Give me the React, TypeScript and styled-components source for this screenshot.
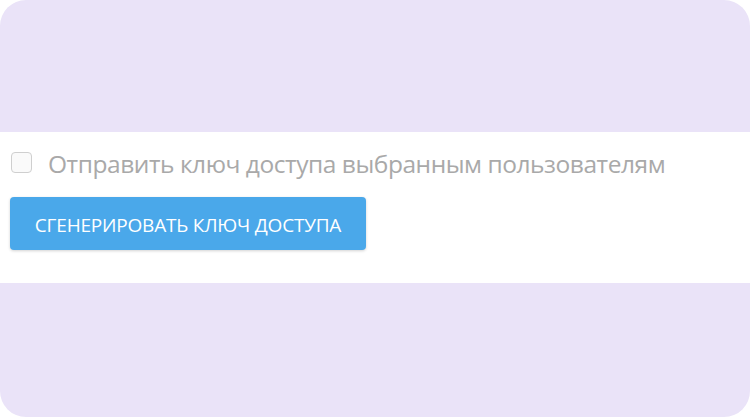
import React from "react";
import styled, { createGlobalStyle } from "styled-components";

const Global = createGlobalStyle`
  html, body { margin: 0; padding: 0; background: #ffffff; }
  * { box-sizing: border-box; }
`;

const Frame = styled.div`
  width: 750px;
  height: 417px;
  background: #eae3f8;
  border-radius: 26px;
  overflow: hidden;
  display: flex;
  flex-direction: column;
  justify-content: flex-start;
  padding-top: 132px;
`;

const Panel = styled.div`
  background: #ffffff;
  height: 151px;
  padding: 19px 10px 0 11px;
  display: flex;
  flex-direction: column;
  align-items: flex-start;
`;

const CheckRow = styled.label`
  display: flex;
  align-items: center;
  gap: 16px;
  height: 22px;
`;

const Box = styled.span`
  width: 21px;
  height: 21px;
  border: 1.5px solid #cfcfcf;
  border-radius: 4px;
  background: #fafafa;
  flex-shrink: 0;
`;

const Label = styled.span`
  font-family: "Open Sans", sans-serif;
  font-size: 24.5px;
  letter-spacing: -0.45px;
  color: #a9a9a9;
  line-height: 24px;
  margin-top: 3px;
  white-space: nowrap;
`;

const Button = styled.button`
  margin-top: 24px;
  margin-left: -1px;
  width: 356px;
  height: 53px;
  border: none;
  border-radius: 4px;
  background: #4aa8ea;
  box-shadow: 0 1px 3px rgba(0, 0, 0, 0.18);
  color: #ffffff;
  font-family: "Open Sans", sans-serif;
  font-size: 19px;
  text-transform: uppercase;
  letter-spacing: -0.2px;
  display: flex;
  align-items: center;
  justify-content: center;
  padding: 2px 0 0;
  white-space: nowrap;
`;

export default function App() {
  return (
    <>
      <Global />
      <Frame>
        <Panel>
          <CheckRow>
            <Box />
            <Label>Отправить ключ доступа выбранным пользователям</Label>
          </CheckRow>
          <Button>Сгенерировать ключ доступа</Button>
        </Panel>
      </Frame>
    </>
  );
}
